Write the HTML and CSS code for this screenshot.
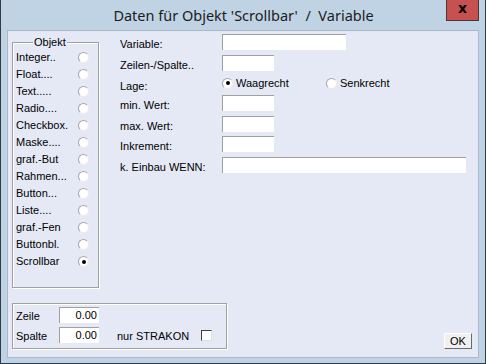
FILE: index.html
```html
<!DOCTYPE html>
<html>
<head>
<meta charset="utf-8">
<link rel="stylesheet" href="styles.css">
</head>
<body>
<div class="window">
  <div class="titlebar">
    <div class="title">Daten für Objekt 'Scrollbar'  /  Variable</div>
    <div class="close">x</div>
  </div>
  <div class="client">
    <div class="top">
      <div class="group objekt">
        <span class="legend">Objekt</span>
        <div class="orow"><span class="olabel">Integer..</span><span class="radio"></span></div>
        <div class="orow"><span class="olabel">Float....</span><span class="radio"></span></div>
        <div class="orow"><span class="olabel">Text.....</span><span class="radio"></span></div>
        <div class="orow"><span class="olabel">Radio....</span><span class="radio"></span></div>
        <div class="orow"><span class="olabel">Checkbox.</span><span class="radio"></span></div>
        <div class="orow"><span class="olabel">Maske....</span><span class="radio"></span></div>
        <div class="orow"><span class="olabel">graf.-But</span><span class="radio"></span></div>
        <div class="orow"><span class="olabel">Rahmen...</span><span class="radio"></span></div>
        <div class="orow"><span class="olabel">Button...</span><span class="radio"></span></div>
        <div class="orow"><span class="olabel">Liste....</span><span class="radio"></span></div>
        <div class="orow"><span class="olabel">graf.-Fen</span><span class="radio"></span></div>
        <div class="orow"><span class="olabel">Buttonbl.</span><span class="radio"></span></div>
        <div class="orow"><span class="olabel">Scrollbar</span><span class="radio checked"></span></div>
      </div>
      <div class="form">
        <span class="flabel">Variable:</span><span class="field w-var"></span>
        <span class="flabel">Zeilen-/Spalte..</span><span class="field w-small"></span>
        <span class="flabel">Lage:</span>
        <div class="lage">
          <div class="ritem wide"><span class="radio checked"></span><span>Waagrecht</span></div>
          <div class="ritem"><span class="radio"></span><span>Senkrecht</span></div>
        </div>
        <span class="flabel">min. Wert:</span><span class="field w-small"></span>
        <span class="flabel">max. Wert:</span><span class="field w-small"></span>
        <span class="flabel">Inkrement:</span><span class="field w-small"></span>
        <span class="flabel">k. Einbau WENN:</span><span class="field w-long"></span>
      </div>
    </div>
    <div class="bottom">
      <div class="group pos">
        <div class="prow"><span class="plabel">Zeile</span><span class="field num">0.00</span></div>
        <div class="prow"><span class="plabel">Spalte</span><span class="field num">0.00</span><span class="strakon">nur STRAKON</span><span class="check"></span></div>
      </div>
      <div class="ok">OK</div>
    </div>
  </div>
</div>
</body>
</html>
```

FILE: styles.css
```css
* { box-sizing: border-box; }
html, body { margin: 0; padding: 0; }
body {
  width: 486px;
  height: 364px;
  overflow: hidden;
  font-family: "Liberation Sans", Arial, sans-serif;
  font-size: 11px;
  color: #000;
}
.window {
  width: 486px;
  height: 364px;
  background: #bfd3e5;
  border-left: 1px solid #2f3b47;
  border-right: 1px solid #2f3b47;
  border-bottom: 1px solid #2f3b47;
  display: flex;
  flex-direction: column;
}
.titlebar {
  position: relative;
  height: 30px;
  flex: none;
}
.title {
  white-space: pre;
  text-align: center;
  font-family: "Noto Sans", "Open Sans", sans-serif;
  font-size: 14.5px;
  line-height: 30px;
  color: #1c1c1c;
  padding-left: 1px;
}
.close {
  position: absolute;
  top: 0;
  right: 6px;
  width: 33px;
  height: 21px;
  background: #c75050;
  border: 1px solid #4b3535;
  border-top: none;
  color: #000;
  font-family: "DejaVu Sans", sans-serif;
  font-weight: bold;
  font-size: 14px;
  line-height: 17px;
  text-align: center;
}
.client {
  flex: 1;
  margin: 0 6px 5px 6px;
  background: #e4e9f5;
  border: 1px solid #aab9c9;
  display: flex;
  flex-direction: column;
  padding: 11px 6px 8px 4px;
}
.top {
  display: flex;
  align-items: flex-start;
}
.group {
  position: relative;
  border: 1px solid #a0a0a0;
  box-shadow: inset 1px 1px 0 #ffffff, 1px 1px 0 #ffffff;
}
.objekt {
  width: 87px;
  height: 246px;
  padding: 6px 0 0 3px;
}
.legend {
  position: absolute;
  top: -7px;
  left: 20px;
  padding: 0 1px;
  line-height: 12px;
  background: #e4e9f5;
}
.orow {
  height: 17px;
  line-height: 17px;
  display: flex;
  align-items: center;
}
.olabel {
  width: 62px;
}
.radio {
  display: inline-block;
  position: relative;
  width: 11px;
  height: 11px;
  border-radius: 50%;
  background: #fff;
  border: 1px solid;
  border-color: #a6a6a6 #ececec #ececec #a6a6a6;
  flex: none;
}
.radio.checked::after {
  content: "";
  position: absolute;
  left: 2.5px;
  top: 2.5px;
  width: 4px;
  height: 4px;
  border-radius: 50%;
  background: #000;
}
.form {
  margin-left: 21px;
  margin-top: -8px;
  display: grid;
  grid-template-columns: 102px auto;
  grid-template-rows: 16px 16px 14px 16px 15px 16px 16px;
  row-gap: 5px;
  align-items: start;
}
.flabel {
  line-height: 16px;
  padding-top: 2px;
  white-space: nowrap;
}
.field {
  display: block;
  height: 16px;
  background: #fff;
  border-top: 1px solid #a0a0a0;
  border-left: 1px solid #a0a0a0;
}
.w-var { width: 124px; }
.w-small { width: 52px; }
.w-long { width: 244px; }
.lage {
  display: flex;
  align-items: center;
  height: 14px;
}
.ritem {
  display: flex;
  align-items: center;
  gap: 3px;
  line-height: 14px;
}
.ritem.wide { width: 104px; }
.bottom {
  margin-top: auto;
  display: flex;
  justify-content: space-between;
  align-items: flex-end;
}
.pos {
  width: 215px;
  height: 46px;
  padding: 3px 0 0 3px;
  display: flex;
  flex-direction: column;
  gap: 4px;
}
.prow {
  display: flex;
  align-items: center;
  height: 16px;
}
.plabel {
  width: 43px;
  line-height: 16px;
  padding-top: 1px;
}
.num {
  width: 40px;
  text-align: right;
  padding-right: 2px;
  line-height: 14px;
}
.strakon {
  margin-left: 18px;
  width: 84px;
  padding-top: 1px;
}
.check {
  width: 11px;
  height: 11px;
  background: #fff;
  border-top: 1px solid #404040;
  border-left: 1px solid #404040;
  border-right: 1px solid #e0e0e0;
  border-bottom: 1px solid #e0e0e0;
  margin-top: 1px;
}
.ok {
  width: 28px;
  height: 16px;
  background: #f0f0f0;
  border-top: 1px solid #ffffff;
  border-left: 1px solid #ffffff;
  border-right: 1px solid #6a6a6a;
  border-bottom: 1px solid #6a6a6a;
  text-align: center;
  line-height: 14px;
}
```
